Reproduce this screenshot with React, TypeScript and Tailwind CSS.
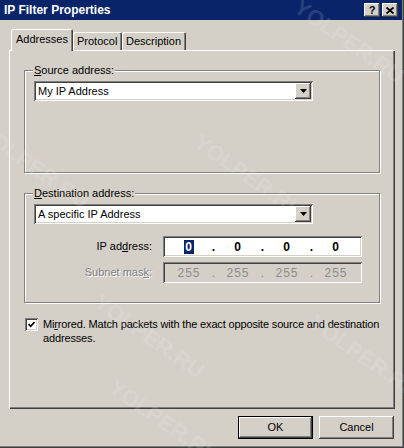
import React from "react";

const raised =
  "shadow-[inset_-1px_-1px_0_#404040,inset_1px_1px_0_#fff,inset_-2px_-2px_0_#808080]";
const sunken =
  "shadow-[inset_1px_1px_0_#808080,inset_-1px_-1px_0_#fff,inset_2px_2px_0_#404040,inset_-2px_-2px_0_#d4d0c8]";

const Combo = ({ text }: { text: string }) => (
  <div className={`w-[279px] h-[20px] bg-white flex items-center p-[2px] ${sunken}`}>
    <span className="flex-1 pl-[2px] leading-none">{text}</span>
    <div className={`w-[16px] h-[16px] bg-[#d4d0c8] flex items-center justify-center ${raised}`}>
      <svg width="7" height="4" viewBox="0 0 7 4">
        <polygon points="0,0 7,0 3.5,4" fill="#000" />
      </svg>
    </div>
  </div>
);

const IpField = ({ parts, disabled }: { parts: string[]; disabled?: boolean }) => (
  <div
    className={`w-[199px] h-[21px] flex items-center pl-[8px] font-bold text-[12px] ${sunken} ${
      disabled ? "bg-[#d4d0c8] text-[#8c8c8c] font-normal" : "bg-white text-black"
    }`}
  >
    {parts.map((p, i) => (
      <React.Fragment key={i}>
        {i > 0 && <span className="w-[13px] text-center">.</span>}
        <span className="w-[36px] text-center tracking-[1px]">
          {i === 0 && !disabled ? (
            <span className="bg-[#0a246a] text-white px-[1px]">{p}</span>
          ) : (
            p
          )}
        </span>
      </React.Fragment>
    ))}
  </div>
);

const Group = ({
  label,
  h,
  children,
}: {
  label: React.ReactNode;
  h: string;
  children: React.ReactNode;
}) => (
  <div
    className={`relative w-[356px] ${h} border border-[#808080] shadow-[1px_1px_0_#fff,inset_1px_1px_0_#fff] pt-[10px] pl-[9px]`}
  >
    <span className="absolute left-[8px] -top-[8px] px-[1px] bg-[#d4d0c8] leading-[14px]">
      {label}
    </span>
    {children}
  </div>
);

const Watermark = ({ pos }: { pos: string }) => (
  <span
    className={`absolute ${pos} pointer-events-none select-none rotate-[35deg] text-[22px] font-bold text-white/15 whitespace-nowrap`}
  >
    YOLPER.RU
  </span>
);

export default function App() {
  return (
    <div className="relative w-[404px] h-[448px] overflow-hidden bg-[#d4d0c8] flex flex-col font-['Liberation_Sans',Arial,sans-serif] text-[11px] text-black shadow-[inset_-1px_-1px_0_#404040,inset_-2px_-2px_0_#808080]">
      {/* title bar */}
      <div className="h-[20px] mr-[2px] bg-[#0a246a] flex items-center justify-between pl-[4px] pr-[4px]">
        <span className="text-white font-bold text-[12px]">IP Filter Properties</span>
        <div className="flex gap-[2px]">
          <div className={`w-[16px] h-[14px] bg-[#d4d0c8] flex items-center justify-center font-bold text-[11px] leading-none ${raised}`}>
            ?
          </div>
          <div className={`w-[16px] h-[14px] bg-[#d4d0c8] flex items-center justify-center ${raised}`}>
            <svg width="8" height="7" viewBox="0 0 8 7">
              <path d="M0.5 0.5 L7.5 6.5 M7.5 0.5 L0.5 6.5" stroke="#000" strokeWidth="1.8" />
            </svg>
          </div>
        </div>
      </div>

      <div className="flex-1 flex flex-col px-[9px] pt-[8px]">
        {/* tabs */}
        <div className="flex items-end h-[22px] pl-[2px]">
          <div className="relative z-10 -mb-px h-[22px] w-[62px] bg-[#d4d0c8] rounded-t-[2px] shadow-[inset_1px_1px_0_#fff,inset_-1px_0_0_#404040,inset_-2px_0_0_#808080] pl-[5px] pt-[2px]">
            Addresses
          </div>
          <div className="h-[18px] w-[49px] rounded-t-[2px] shadow-[inset_1px_1px_0_#fff,inset_-1px_0_0_#404040,inset_-2px_0_0_#808080] pl-[4px] pt-[1px]">
            Protocol
          </div>
          <div className="h-[18px] w-[64px] rounded-t-[2px] shadow-[inset_1px_1px_0_#fff,inset_-1px_0_0_#404040,inset_-2px_0_0_#808080] pl-[4px] pt-[1px]">
            Description
          </div>
        </div>

        {/* panel */}
        <div className="h-[359px] shadow-[inset_1px_1px_0_#fff,inset_-1px_-1px_0_#404040,inset_-2px_-2px_0_#808080] pt-[20px] pl-[15px] flex flex-col">
          <Group
            h="h-[103px]"
            label={
              <>
                <span className="underline">S</span>ource address:
              </>
            }
          >
            <Combo text="My IP Address" />
          </Group>

          <div className="mt-[20px]">
            <Group
              h="h-[110px]"
              label={
                <>
                  <span className="underline">D</span>estination address:
                </>
              }
            >
              <Combo text="A specific IP Address" />
              <div className="mt-[12px] flex items-center">
                <span className="w-[118px] text-right">
                  IP ad<span className="underline">d</span>ress:
                </span>
                <div className="ml-[11px]">
                  <IpField parts={["0", "0", "0", "0"]} />
                </div>
              </div>
              <div className="mt-[5px] flex items-center">
                <span className="w-[118px] text-right text-[#808080] [text-shadow:1px_1px_0_#fff]">
                  Subnet mas<span className="underline">k</span>:
                </span>
                <div className="ml-[11px]">
                  <IpField parts={["255", "255", "255", "255"]} disabled />
                </div>
              </div>
            </Group>
          </div>

          <div className="mt-[14px] ml-[1px] flex items-start gap-[5px]">
            <div className={`w-[13px] h-[13px] bg-white flex items-center justify-center mt-[1px] ${sunken}`}>
              <svg width="7" height="7" viewBox="0 0 7 7">
                <path d="M0.5 3 L2.7 5.3 L6.5 1" stroke="#000" strokeWidth="1.7" fill="none" />
              </svg>
            </div>
            <span className="leading-[14px] whitespace-nowrap tracking-[-0.15px]">
              Mi<span className="underline">r</span>rored. Match packets with the exact opposite source and destination
              <br />
              addresses.
            </span>
          </div>
        </div>

        {/* buttons */}
        <div className="mt-[7px] flex justify-end gap-[6px] pr-[1px]">
          <button className="w-[75px] h-[23px] bg-[#d4d0c8] shadow-[inset_0_0_0_1px_#000,inset_-2px_-2px_0_#404040,inset_2px_2px_0_#fff,inset_-3px_-3px_0_#808080]">
            OK
          </button>
          <button className={`w-[75px] h-[23px] bg-[#d4d0c8] ${raised}`}>Cancel</button>
        </div>
      </div>

      <Watermark pos="left-[285px] top-[25px]" />
      <Watermark pos="left-[185px] top-[160px]" />
      <Watermark pos="-left-[30px] top-[150px]" />
      <Watermark pos="left-[300px] top-[340px]" />
      <Watermark pos="left-[85px] top-[320px]" />
      <Watermark pos="left-[100px] top-[405px]" />
    </div>
  );
}
